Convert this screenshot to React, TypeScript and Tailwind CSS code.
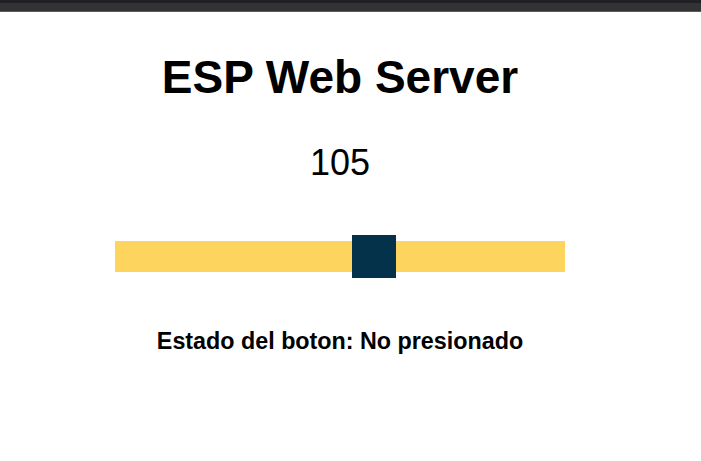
import React from "react";

export default function App() {
  const value = 105;
  const min = 0;
  const max = 180;
  const trackW = 450;
  const thumbW = 44;
  const left = Math.round(((value - min) / (max - min)) * (trackW - thumbW));
  return (
    <div className="w-[701px] h-[461px] bg-white overflow-hidden" style={{ fontFamily: '"Liberation Sans", Arial, sans-serif' }}>
      <div className="h-[3px] bg-[#202124]" />
      <div className="h-[8px] bg-[#333333]" />
      <div className="h-[1px] bg-[#5c5c5c]" />
      <div className="w-[680px] flex flex-col items-center text-black">
        <h2 className="mt-[42px] h-[46px] text-[46px] leading-[46px] font-bold whitespace-nowrap">ESP Web Server</h2>
        <p className="mt-[45px] h-[36px] text-[36px] leading-[36px]">{value}</p>
        <div className="mt-[54px] relative w-[450px] h-[43px] flex items-center">
          <div className="w-full h-[31px] bg-[#FDD55E]" />
          <div className="absolute top-0 w-[44px] h-[43px] bg-[#03324A]" style={{ left }} />
        </div>
        <p className="mt-[52px] h-[23px] text-[23.3px] leading-[23px] font-bold whitespace-nowrap">Estado del boton: No presionado</p>
      </div>
    </div>
  );
}
